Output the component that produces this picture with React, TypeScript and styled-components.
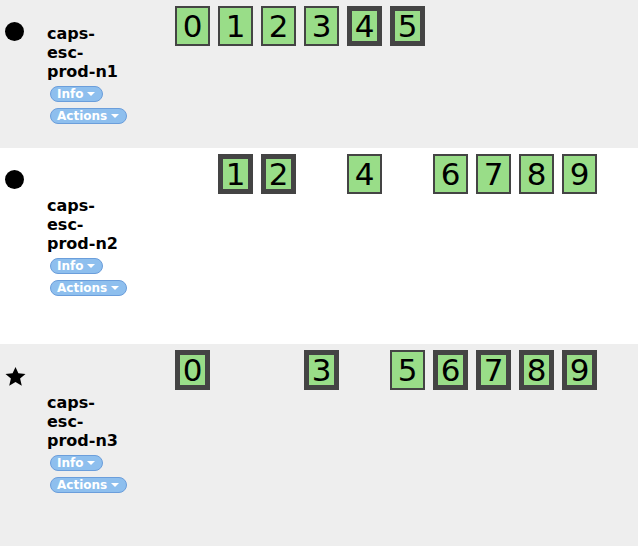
import React from "react";
import styled, { createGlobalStyle } from "styled-components";

const Global = createGlobalStyle`
  html, body { margin: 0; padding: 0; overflow: hidden; }
  body { font-family: "DejaVu Sans", Verdana, sans-serif; color: #000; background: #eeeeee; }
`;

const Page = styled.div`
  display: flex;
  flex-direction: column;
  height: 100vh;
`;

const Section = styled.section<{ $shade: boolean; $height?: number }>`
  display: flex;
  flex: ${(p) => (p.$height ? "none" : "1")};
  height: ${(p) => (p.$height ? `${p.$height}px` : "auto")};
  background: ${(p) => (p.$shade ? "#eeeeee" : "#ffffff")};
`;

const LeftCol = styled.div`
  flex: none;
  width: 170px;
  padding: 22px 0 0 5px;
  display: flex;
  flex-direction: column;
  align-items: flex-start;
`;

const Header = styled.div<{ $stacked: boolean }>`
  display: flex;
  flex-direction: ${(p) => (p.$stacked ? "column" : "row")};
  align-items: flex-start;
`;

const Dot = styled.span`
  display: block;
  width: 19px;
  height: 19px;
  border-radius: 50%;
  background: #000;
`;

const StarIcon = styled.svg`
  display: block;
  width: 21px;
  height: 20px;
`;

const NameBlock = styled.div<{ $stacked: boolean }>`
  margin-left: ${(p) => (p.$stacked ? "42px" : "23px")};
  margin-top: ${(p) => (p.$stacked ? "7px" : "2px")};
  width: 76px;
  font-weight: bold;
  font-size: 16px;
  line-height: 19px;
`;

const Pill = styled.button<{ $first?: boolean }>`
  display: inline-flex;
  align-items: center;
  gap: 4px;
  box-sizing: border-box;
  height: 16px;
  margin: ${(p) => (p.$first ? "5px" : "6px")} 0 0 45px;
  padding: 0 7px 0 6px;
  border: 1px solid #6b9edb;
  border-radius: 8px;
  background: #8ebfee;
  color: #ffffff;
  font-family: "DejaVu Sans", Verdana, sans-serif;
  font-weight: bold;
  font-size: 12px;
  line-height: 14px;
  cursor: pointer;
`;

const Caret = styled.span`
  display: block;
  width: 0;
  height: 0;
  border-left: 4px solid transparent;
  border-right: 4px solid transparent;
  border-top: 4px solid #ffffff;
`;

const BoxRow = styled.div`
  display: flex;
  gap: 8px;
  padding-top: 6px;
  align-items: flex-start;
`;

const Box = styled.div<{ $thick: boolean; $empty: boolean }>`
  box-sizing: border-box;
  width: 35px;
  height: 40px;
  display: flex;
  align-items: center;
  justify-content: center;
  border: ${(p) => (p.$thick ? 5 : 2)}px solid #444444;
  background: #99dd88;
  visibility: ${(p) => (p.$empty ? "hidden" : "visible")};
  font-family: "DejaVu Sans", Verdana, sans-serif;
  font-size: 31px;
  line-height: 1;
  color: #000;
`;

type Node = {
  name: string;
  icon: "dot" | "star";
  stacked: boolean;
  shade: boolean;
  height?: number;
  boxes: Record<number, "thin" | "thick">;
};

const nodes: Node[] = [
  {
    name: "caps-esc-prod-n1",
    icon: "dot",
    stacked: false,
    shade: true,
    height: 148,
    boxes: { 0: "thin", 1: "thin", 2: "thin", 3: "thin", 4: "thick", 5: "thick" },
  },
  {
    name: "caps-esc-prod-n2",
    icon: "dot",
    stacked: true,
    shade: false,
    height: 196,
    boxes: { 1: "thick", 2: "thick", 4: "thin", 6: "thin", 7: "thin", 8: "thin", 9: "thin" },
  },
  {
    name: "caps-esc-prod-n3",
    icon: "star",
    stacked: true,
    shade: true,
    boxes: { 0: "thick", 3: "thick", 5: "thin", 6: "thick", 7: "thick", 8: "thick", 9: "thick" },
  },
];

const Star = () => (
  <StarIcon viewBox="0 0 21 20">
    <polygon
      fill="#000"
      points="10.5,1 13.4,7.3 20.5,8 15.1,12.6 16.8,19.8 10.5,16 4.2,19.8 5.9,12.6 0.5,8 7.6,7.3"
    />
  </StarIcon>
);

export default function App() {
  return (
    <Page>
      <Global />
      {nodes.map((n) => {
        const last = Math.max(...Object.keys(n.boxes).map(Number));
        const slots = Array.from({ length: last + 1 }, (_, i) => i);
        return (
          <Section key={n.name} $shade={n.shade} $height={n.height}>
            <LeftCol>
              <Header $stacked={n.stacked}>
                {n.icon === "dot" ? <Dot /> : <Star />}
                <NameBlock $stacked={n.stacked}>{n.name}</NameBlock>
              </Header>
              <Pill $first>
                Info <Caret />
              </Pill>
              <Pill>
                Actions <Caret />
              </Pill>
            </LeftCol>
            <BoxRow>
              {slots.map((i) => (
                <Box key={i} $thick={n.boxes[i] === "thick"} $empty={!n.boxes[i]}>
                  {i}
                </Box>
              ))}
            </BoxRow>
          </Section>
        );
      })}
    </Page>
  );
}
